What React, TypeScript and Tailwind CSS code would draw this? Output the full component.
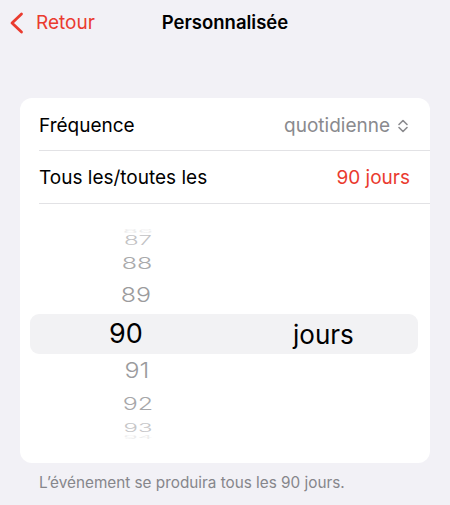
const font = { fontFamily: 'Inter, "Noto Sans", sans-serif' }

function BackChevron() {
  return (
    <svg width="16" height="22" viewBox="0 0 16 22" fill="none" stroke="#ea3b2f" strokeWidth="2.8" strokeLinecap="round" strokeLinejoin="round">
      <path d="M12.5 2 L3 11 L12.5 20" />
    </svg>
  )
}

function UpDown() {
  return (
    <svg width="12" height="14" viewBox="0 0 12 14" fill="none" stroke="#8a8a8e" strokeWidth="1.6" strokeLinecap="round" strokeLinejoin="round">
      <path d="M2 5.5 L6 1.5 L10 5.5" />
      <path d="M2 8.5 L6 12.5 L10 8.5" />
    </svg>
  )
}

function Wheel() {
  return (
    <div className="relative h-[259px] pt-[23px]">
      <div className="absolute left-[10px] right-[12px] top-[110px] h-[40px] rounded-[9px] bg-[#f2f2f4]" />
      <div className="relative flex flex-col font-light">
        <div className="flex h-[8px] w-[60px] ml-[88px] items-center justify-center text-[25px] text-[#ebebeb] scale-y-[0.2]">86</div>
        <div className="flex h-[12px] w-[60px] ml-[88px] items-center justify-center text-[24px] text-[#c2c2c4] scale-y-[0.55]">87</div>
        <div className="flex h-[34px] w-[60px] ml-[87px] items-center justify-center text-[25px] text-[#a9a9ab] scale-y-[0.66]">88</div>
        <div className="flex h-[29px] w-[60px] ml-[86px] items-center justify-center text-[25px] text-[#9b9b9d] scale-y-[0.82]">89</div>
        <div className="flex h-[48px] items-center font-normal">
          <div className="flex w-[60px] ml-[76px] justify-center text-[27px] text-black">90</div>
          <div className="ml-[137px] text-[26px] text-black">jours</div>
        </div>
        <div className="flex h-[26px] w-[60px] ml-[87px] items-center justify-center text-[25px] text-[#9b9b9d] scale-y-[0.88]">91</div>
        <div className="flex h-[39px] w-[60px] ml-[88px] items-center justify-center text-[25px] text-[#a7a7a9] scale-y-[0.71]">92</div>
        <div className="flex h-[9px] w-[60px] ml-[88px] items-center justify-center text-[24px] text-[#c6c6c8] scale-y-[0.48]">93</div>
        <div className="flex h-[10px] w-[60px] ml-[88px] items-center justify-center text-[24px] text-[#ececec] scale-y-[0.2]">94</div>
      </div>
    </div>
  )
}

export default function App() {
  return (
    <div className="h-[505px] w-[450px] overflow-hidden bg-[#f2f1f6]" style={font}>
      <div className="grid h-[46px] grid-cols-[1fr_auto_1fr] items-center">
        <div className="flex items-center pl-[9px] text-[19px] text-[#ea3b2f]">
          <BackChevron />
          <span className="ml-[11px]">Retour</span>
        </div>
        <div className="text-[18.5px] font-semibold text-black">Personnalisée</div>
        <div />
      </div>

      <div className="mx-[20px] mt-[52px] overflow-hidden rounded-[12px] bg-white">
        <div className="ml-[19px] flex h-[53px] items-center justify-between border-b border-[#e2e2e5] pr-[21px] pt-[4px]">
          <span className="text-[19px] text-black">Fréquence</span>
          <span className="flex items-center gap-[7px] text-[19px] text-[#8a8a8e]">
            quotidienne
            <UpDown />
          </span>
        </div>
        <div className="ml-[19px] flex h-[53px] items-center justify-between border-b border-[#e2e2e5] pr-[20px] pt-[3px]">
          <span className="text-[19px] text-black">Tous les/toutes les</span>
          <span className="text-[19px] text-[#ea3b2f]">90 jours</span>
        </div>
        <Wheel />
      </div>

      <div className="mt-[11px] px-[39px] text-[15.3px] leading-[17px] text-[#86868b]">
        L’événement se produira tous les 90 jours.
      </div>
    </div>
  )
}
